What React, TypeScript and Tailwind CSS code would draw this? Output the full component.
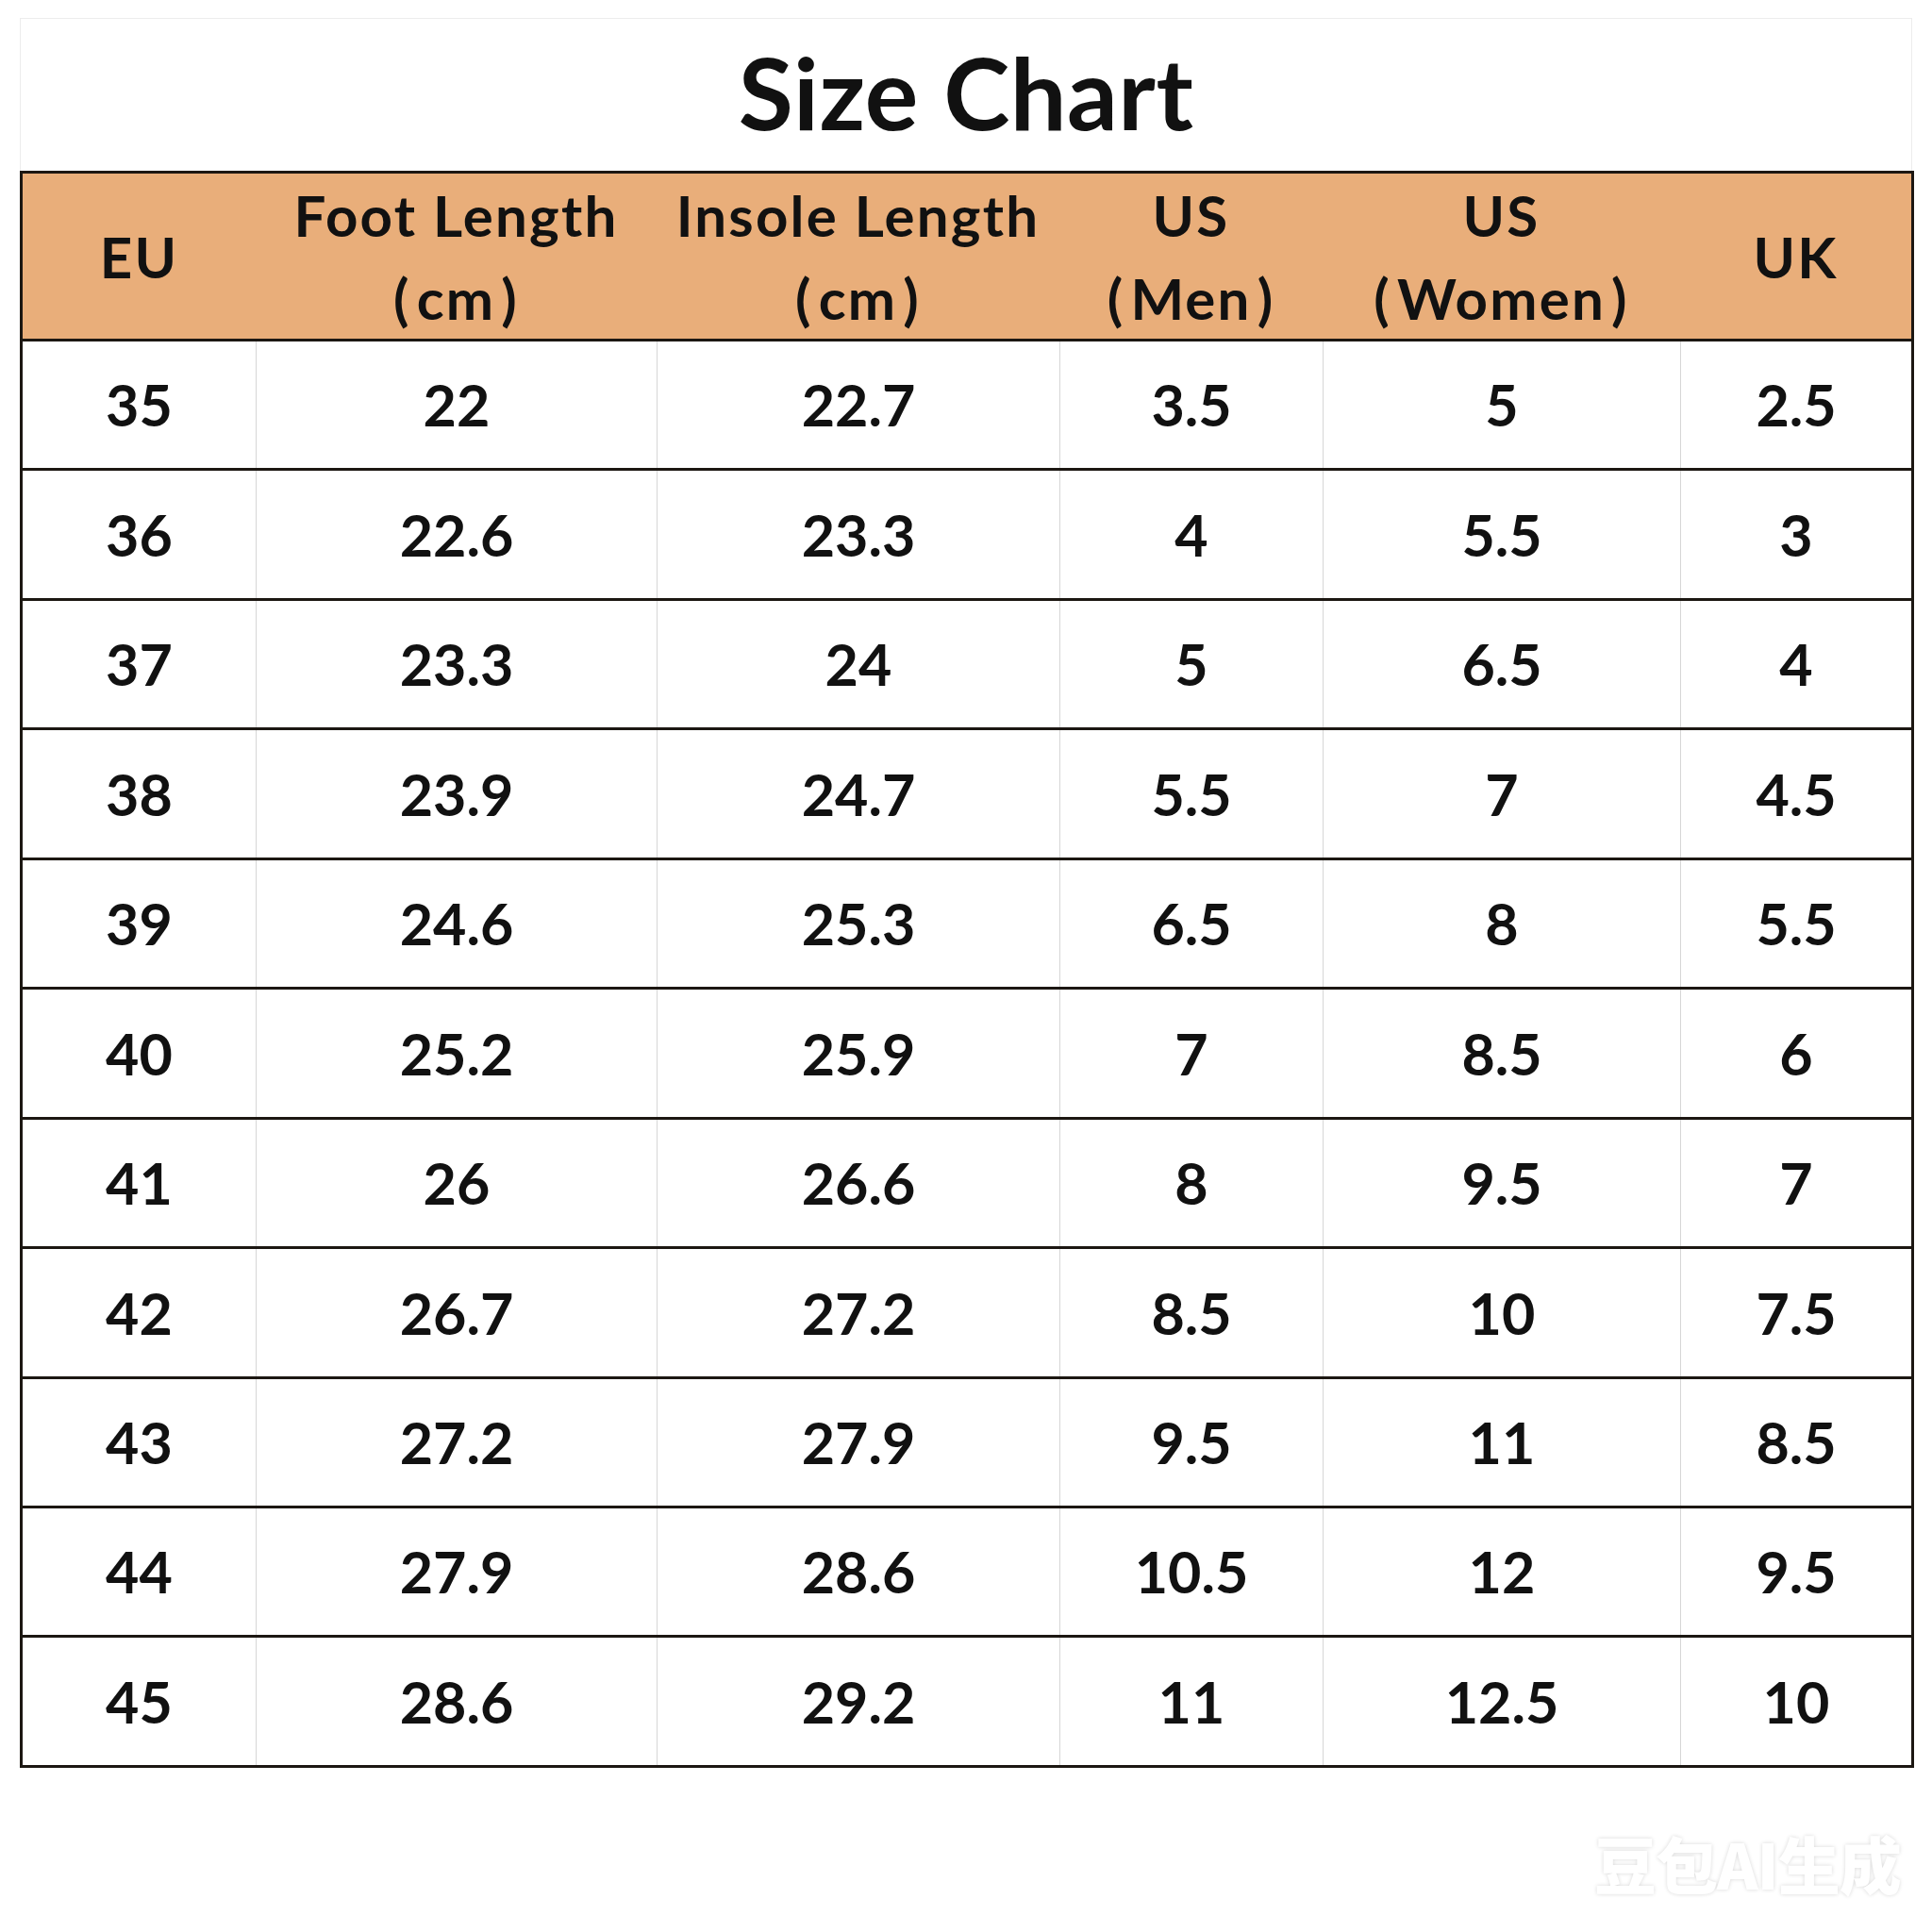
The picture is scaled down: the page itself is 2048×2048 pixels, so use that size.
import React from "react";

const rows: string[][] = [
  ["35", "22", "22.7", "3.5", "5", "2.5"],
  ["36", "22.6", "23.3", "4", "5.5", "3"],
  ["37", "23.3", "24", "5", "6.5", "4"],
  ["38", "23.9", "24.7", "5.5", "7", "4.5"],
  ["39", "24.6", "25.3", "6.5", "8", "5.5"],
  ["40", "25.2", "25.9", "7", "8.5", "6"],
  ["41", "26", "26.6", "8", "9.5", "7"],
  ["42", "26.7", "27.2", "8.5", "10", "7.5"],
  ["43", "27.2", "27.9", "9.5", "11", "8.5"],
  ["44", "27.9", "28.6", "10.5", "12", "9.5"],
  ["45", "28.6", "29.2", "11", "12.5", "10"],
];

const headers: { top: string; sub?: string }[] = [
  { top: "EU" },
  { top: "Foot Length", sub: "cm" },
  { top: "Insole Length", sub: "cm" },
  { top: "US", sub: "Men" },
  { top: "US", sub: "Women" },
  { top: "UK" },
];

const gridCols = "grid grid-cols-[247px_425px_427px_279px_379px_245px]";

export default function App() {
  return (
    <div
      className="relative w-[2048px] h-[2048px] bg-white text-[#111111]"
      style={{ fontFamily: "Lato, 'Noto Sans', sans-serif" }}
    >
      <div className="pt-[19px] px-[21px]">
        <div className="h-[162px] border-t border-x border-[#ececec] flex justify-center">
          <h1 className="mt-[14px] text-[106px] leading-[126px] font-bold tracking-[0.5px]">
            Size Chart
          </h1>
        </div>
        <div className="w-[2008px] border-[3px] border-[#1c1712]">
          <div className={`${gridCols} h-[178px] bg-[#e9ae7a] border-b-[3px] border-[#1c1712]`}>
            {headers.map((h, i) => (
              <div
                key={i}
                className="flex flex-col items-center justify-center text-[60px] leading-[88px] font-bold tracking-[2.2px] pb-[3px]"
              >
                <span className="whitespace-nowrap">{h.top}</span>
                {h.sub && (
                  <span className="whitespace-nowrap">
                    <span className="mr-[6px]">(</span>
                    {h.sub}
                    <span className="ml-[6px]">)</span>
                  </span>
                )}
              </div>
            ))}
          </div>
          {rows.map((r, ri) => (
            <div
              key={ri}
              className={`${gridCols} ${
                ri < rows.length - 1
                  ? "h-[137.45px] border-b-[3px] border-[#1c1712]"
                  : "h-[134.45px]"
              }`}
            >
              {r.map((c, ci) => (
                <div
                  key={ci}
                  className={`flex items-center justify-center text-[61px] font-bold ${
                    ci > 0 ? "border-l border-[#d6d6d6]" : ""
                  }`}
                >
                  {c}
                </div>
              ))}
            </div>
          ))}
        </div>
      </div>
      <div
        className="absolute left-[1690px] top-[1925px] text-[66px] font-black text-white tracking-[-1px] [text-shadow:0_0_4px_rgba(0,0,0,0.16)]"
        style={{ fontFamily: "'Noto Sans CJK SC', sans-serif" }}
      >
        豆包AI生成
      </div>
    </div>
  );
}
